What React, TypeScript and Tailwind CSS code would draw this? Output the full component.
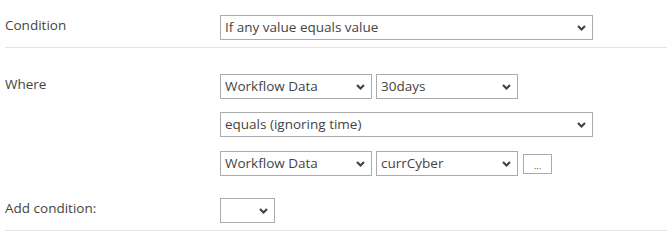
import React from "react";

function Chevron() {
  return (
    <svg width="9" height="6" viewBox="0 0 9 6" className="shrink-0">
      <polyline points="1,1 4.5,4.5 8,1" fill="none" stroke="#444444" strokeWidth="2.2" />
    </svg>
  );
}

function Select({ value, w }: { value: string; w: string }) {
  return (
    <div className={`${w} h-[25px] border border-[#ababab] bg-white flex items-center pl-[4px] pr-[6px] justify-between`}>
      <span className="text-[#444444] whitespace-nowrap">{value}</span>
      <Chevron />
    </div>
  );
}

export default function App() {
  return (
    <div
      className="w-[672px] h-[250px] bg-white px-[5px] text-[13.5px] text-[#444444]"
      style={{ fontFamily: '"Open Sans", "Noto Sans", sans-serif' }}
    >
      <div className="flex items-start pt-[15px] pb-[7px] border-b border-[#e3e3e3]">
        <div className="w-[215px] leading-[20px]">Condition</div>
        <Select value="If any value equals value" w="w-[373px]" />
      </div>
      <div className="flex items-start pt-[26px] pb-[7px] border-b border-[#e3e3e3]">
        <div className="w-[215px] leading-[20px]">Where</div>
        <div className="flex flex-col">
          <div className="flex gap-[4px]">
            <Select value="Workflow Data" w="w-[152px]" />
            <Select value="30days" w="w-[142px]" />
          </div>
          <div className="mt-[13px]">
            <Select value="equals (ignoring time)" w="w-[373px]" />
          </div>
          <div className="flex items-start gap-[4px] mt-[14px]">
            <Select value="Workflow Data" w="w-[152px]" />
            <Select value="currCyber" w="w-[142px]" />
            <div className="ml-[1px] mt-[3px] w-[29px] h-[20px] border border-[#ababab] bg-white flex items-end justify-center text-[9px] leading-[12px] pb-[1px]">
              ...
            </div>
          </div>
          <div className="flex items-start mt-[22px] -ml-[215px]">
            <div className="w-[215px] leading-[20px]">Add condition:</div>
            <Select value="" w="w-[55px]" />
          </div>
        </div>
      </div>
    </div>
  );
}
